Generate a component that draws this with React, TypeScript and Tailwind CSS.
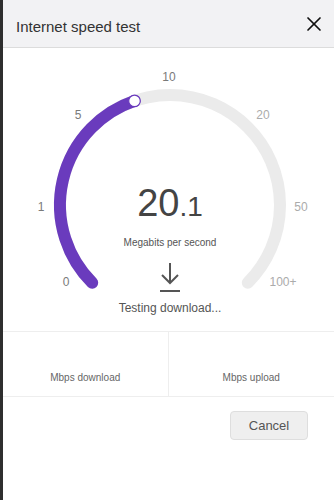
import { X } from 'lucide-react'

const labels = [
  { t: '0', x: 66, y: 282, c: '#7a7a7a' },
  { t: '1', x: 41, y: 207, c: '#7a7a7a' },
  { t: '5', x: 78, y: 115, c: '#7a7a7a' },
  { t: '10', x: 169, y: 77, c: '#7a7a7a' },
  { t: '20', x: 263, y: 115, c: '#ababab' },
  { t: '50', x: 301, y: 207, c: '#ababab' },
  { t: '100+', x: 283, y: 282, c: '#ababab' },
]

function Gauge() {
  // drawn in page coordinates, centre (170, 205), radius 110
  return (
    <svg className="absolute inset-0" width="331" height="283" viewBox="3 48 331 283">
      <path
        d="M 92.2 282.8 A 110 110 0 1 1 247.8 282.8"
        fill="none"
        stroke="#ebebeb"
        strokeWidth="12"
        strokeLinecap="round"
      />
      <path
        d="M 92.2 282.8 A 110 110 0 0 1 134.5 100.9"
        fill="none"
        stroke="#6a3bbd"
        strokeWidth="12"
        strokeLinecap="round"
      />
      <circle cx="134.5" cy="100.9" r="5.8" fill="#fff" stroke="#6a3bbd" strokeWidth="1.2" />
      {labels.map((l) => (
        <text
          key={l.t}
          x={l.x}
          y={l.y}
          fill={l.c}
          fontSize="12"
          textAnchor="middle"
          dominantBaseline="central"
          fontFamily="'Liberation Sans', Arial, sans-serif"
        >
          {l.t}
        </text>
      ))}
    </svg>
  )
}

export default function App() {
  return (
    <div className="flex h-[500px] w-[334px] bg-white font-['Liberation_Sans',Arial,sans-serif]">
      <div className="w-[3px] shrink-0 bg-[#2e2e2e]" />
      <div className="flex flex-1 flex-col">
        <div className="flex h-[48px] items-center justify-between border-b border-[#dcdcdc] bg-[#f2f2f4] pl-[13px] pr-[8px]">
          <span className="pt-[8px] text-[15px] text-[#333]">Internet speed test</span>
          <X className="h-[24px] w-[24px] text-[#111]" strokeWidth={1.7} />
        </div>

        <div className="relative h-[283px]">
          <Gauge />
          <div className="relative flex flex-col items-center pt-[136px] pl-[3px]">
            <div className="flex items-baseline leading-none text-[#444]">
              <span className="text-[38px]">20</span>
              <span className="text-[28px]">.1</span>
            </div>
            <div className="mt-[13px] text-[10px] text-[#555]">Megabits per second</div>
            <svg className="mt-[12px]" width="24" height="32" viewBox="0 0 24 32" fill="none" stroke="#555" strokeWidth="2">
              <path d="M12 1 V21" />
              <path d="M4 13 L12 21 L20 13" />
              <path d="M2 29 H22" />
            </svg>
            <div className="mt-[5px] text-[12px] text-[#555]">Testing download...</div>
          </div>
        </div>

        <div className="grid h-[66px] grid-cols-2 border-y border-[#eeeeee]">
          <div className="flex items-end justify-center border-r border-[#eeeeee] pb-[11px] text-[10px] text-[#666]">
            Mbps download
          </div>
          <div className="flex items-end justify-center pb-[11px] text-[10px] text-[#666]">
            Mbps upload
          </div>
        </div>

        <div className="flex justify-end pt-[14px] pr-[26px]">
          <button className="h-[29px] w-[78px] rounded-[4px] border border-[#dedede] bg-[#efefef] text-[13px] text-[#555]">
            Cancel
          </button>
        </div>
      </div>
    </div>
  )
}
